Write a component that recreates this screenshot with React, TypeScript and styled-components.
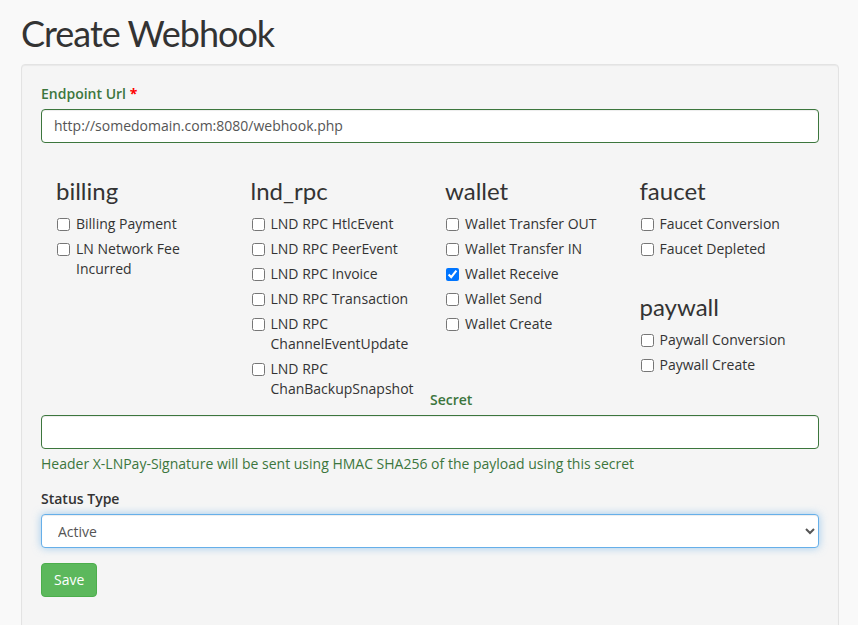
import React from "react";
import styled, { createGlobalStyle } from "styled-components";

const GlobalStyle = createGlobalStyle`
  html, body { margin: 0; padding: 0; background: #f9f9f9; }
  body {
    font-family: "Open Sans", "Liberation Sans", sans-serif;
    font-size: 14px;
    line-height: 1.42857;
    color: #333;
  }
  * { box-sizing: border-box; }
`;

const Page = styled.div`
  padding: 14px 19px 0 21px;
`;

const Title = styled.h1`
  font-family: Lato, "Open Sans", sans-serif;
  font-weight: 400;
  font-size: 36px;
  line-height: 1.1;
  letter-spacing: -1px;
  margin: 0 0 10px;
  color: #333;
`;

const Well = styled.div`
  background: #f5f5f5;
  border: 1px solid #e3e3e3;
  border-radius: 4px;
  padding: 19px;
  box-shadow: inset 0 1px 1px rgba(0, 0, 0, 0.05);
`;

const FormGroup = styled.div`
  margin-bottom: 15px;
`;

const Label = styled.label<{ $tone?: "success" | "default"; $offset?: number; $lift?: number }>`
  display: block;
  font-weight: 600;
  margin-bottom: 5px;
  color: ${(p) => (p.$tone === "success" ? "#3c763d" : "#333")};
  margin-left: ${(p) => p.$offset ?? 0}px;
  margin-top: ${(p) => -(p.$lift ?? 0)}px;
`;

const Required = styled.span`
  color: red;
  font-weight: 700;
`;

const Input = styled.input<{ $tone?: "success" | "focus" }>`
  display: block;
  width: 100%;
  height: 34px;
  padding: 6px 12px;
  font-family: inherit;
  font-size: 14px;
  line-height: 1.42857;
  color: #555;
  background: #fff;
  border: 1px solid #3c763d;
  border-radius: 4px;
  box-shadow: inset 0 1px 1px rgba(0, 0, 0, 0.075);
  outline: none;
`;

const Select = styled.select`
  display: block;
  width: 100%;
  height: 34px;
  padding: 6px 12px;
  font-family: inherit;
  font-size: 14px;
  line-height: 1.42857;
  color: #555;
  background: #fff;
  border: 1px solid #66afe9;
  border-radius: 4px;
  outline: none;
  box-shadow: inset 0 1px 1px rgba(0, 0, 0, 0.075), 0 0 8px rgba(102, 175, 233, 0.6);
`;

const HelpBlock = styled.div`
  color: #3c763d;
  margin: 5px 0 10px;
`;

const EventGrid = styled.div`
  display: grid;
  grid-template-columns: repeat(4, 1fr);
`;

const Column = styled.div`
  padding: 0 15px;
`;

const GroupTitle = styled.h3<{ $extra?: number }>`
  font-family: Lato, "Open Sans", sans-serif;
  font-weight: 400;
  font-size: 24px;
  line-height: 1.1;
  margin: ${(p) => 20 + (p.$extra ?? 0)}px 0 10px;
  color: #333;
`;

const CheckRow = styled.label`
  display: grid;
  grid-template-columns: 20px 1fr;
  margin: 10px 0;
  font-weight: 400;
  line-height: 20px;
  & + & {
    margin-top: -5px;
  }
  ${GroupTitle} + & {
    margin-top: 0;
  }
`;

const Check = styled.input`
  width: 13px;
  height: 13px;
  margin: 4px 0 0 1px;
`;

const SaveButton = styled.button`
  display: inline-block;
  padding: 6px 12px;
  font-family: inherit;
  font-size: 14px;
  line-height: 1.42857;
  color: #fff;
  background: #5cb85c;
  border: 1px solid #4cae4c;
  border-radius: 4px;
  cursor: pointer;
`;

type Group = { title: string; items: { label: string; checked?: boolean }[] };

const columns: Group[][] = [
  [{ title: "billing", items: [{ label: "Billing Payment" }, { label: "LN Network Fee Incurred" }] }],
  [
    {
      title: "lnd_rpc",
      items: [
        { label: "LND RPC HtlcEvent" },
        { label: "LND RPC PeerEvent" },
        { label: "LND RPC Invoice" },
        { label: "LND RPC Transaction" },
        { label: "LND RPC ChannelEventUpdate" },
        { label: "LND RPC ChanBackupSnapshot" },
      ],
    },
  ],
  [
    {
      title: "wallet",
      items: [
        { label: "Wallet Transfer OUT" },
        { label: "Wallet Transfer IN" },
        { label: "Wallet Receive", checked: true },
        { label: "Wallet Send" },
        { label: "Wallet Create" },
      ],
    },
  ],
  [
    { title: "faucet", items: [{ label: "Faucet Conversion" }, { label: "Faucet Depleted" }] },
    { title: "paywall", items: [{ label: "Paywall Conversion" }, { label: "Paywall Create" }] },
  ],
];

export default function App() {
  return (
    <Page>
      <GlobalStyle />
      <Title>Create Webhook</Title>
      <Well>
        <FormGroup>
          <Label $tone="success">
            Endpoint Url <Required>*</Required>
          </Label>
          <Input $tone="success" defaultValue="http://somedomain.com:8080/webhook.php" />
        </FormGroup>

        <EventGrid>
          {columns.map((groups, ci) => (
            <Column key={ci}>
              {groups.map((g, gi) => (
                <React.Fragment key={g.title}>
                  <GroupTitle $extra={gi > 0 ? 15 : 0}>{g.title}</GroupTitle>
                  {g.items.map((it) => (
                    <CheckRow key={it.label}>
                      <Check type="checkbox" defaultChecked={!!it.checked} />
                      <span>{it.label}</span>
                    </CheckRow>
                  ))}
                </React.Fragment>
              ))}
            </Column>
          ))}
        </EventGrid>

        <FormGroup>
          <Label $tone="success" $offset={389} $lift={19}>
            Secret
          </Label>
          <Input $tone="success" />
          <HelpBlock>Header X-LNPay-Signature will be sent using HMAC SHA256 of the payload using this secret</HelpBlock>
        </FormGroup>

        <FormGroup>
          <Label>Status Type</Label>
          <Select defaultValue="active">
            <option value="active">Active</option>
            <option value="inactive">Inactive</option>
          </Select>
        </FormGroup>

        <FormGroup>
          <SaveButton type="button">Save</SaveButton>
        </FormGroup>
      </Well>
    </Page>
  );
}
